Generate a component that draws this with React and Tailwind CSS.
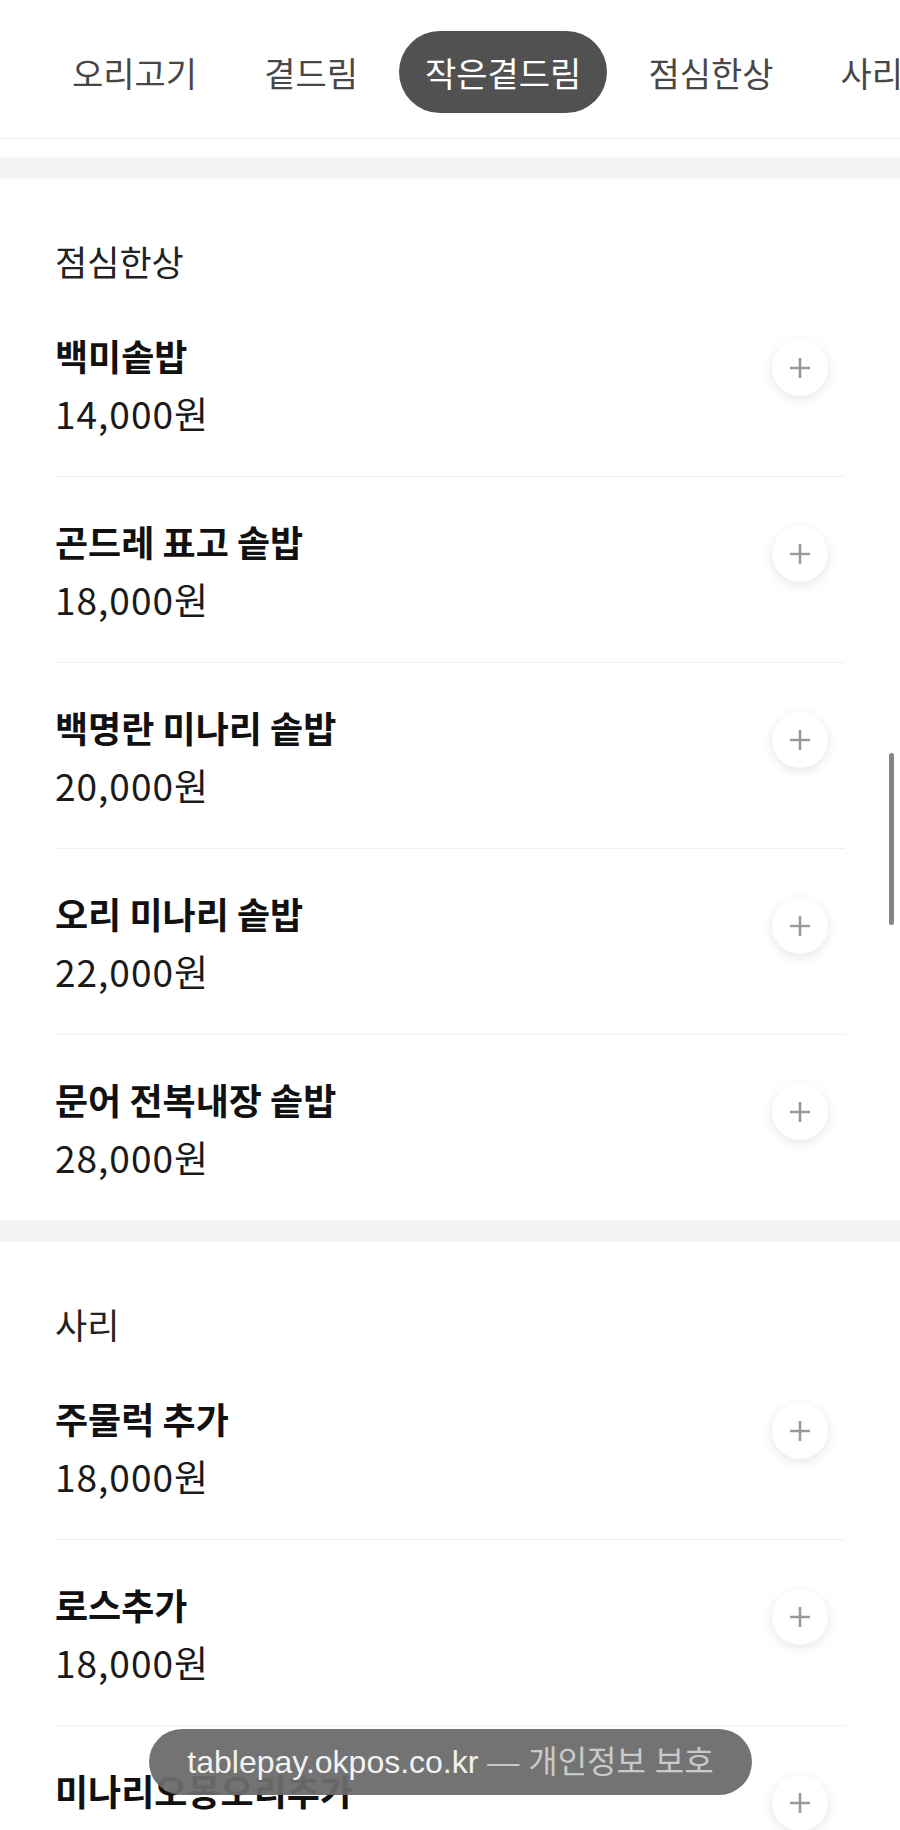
import React from 'react';

const tabs = ['오리고기', '곁드림', '작은곁드림', '점심한상', '사리'];

const sections = [
  {
    title: '점심한상',
    items: [
      { name: '백미솥밥', price: '14,000원' },
      { name: '곤드레 표고 솥밥', price: '18,000원' },
      { name: '백명란 미나리 솥밥', price: '20,000원' },
      { name: '오리 미나리 솥밥', price: '22,000원' },
      { name: '문어 전복내장 솥밥', price: '28,000원' },
    ],
  },
  {
    title: '사리',
    items: [
      { name: '주물럭 추가', price: '18,000원' },
      { name: '로스추가', price: '18,000원' },
      { name: '미나리오몽오리추가', price: '18,000원' },
    ],
  },
];

const PlusButton = () => (
  <button className="mt-[49px] mr-[17px] w-[56px] h-[56px] shrink-0 rounded-full bg-white shadow-[0_3px_12px_rgba(0,0,0,0.10)] flex items-center justify-center">
    <svg width="22" height="22" viewBox="0 0 22 22" fill="none" stroke="#9a9a9a" strokeWidth="2.6">
      <path d="M11 1v20M1 11h20" />
    </svg>
  </button>
);

const MenuRow = ({ item, last }) => (
  <div className={`flex justify-between ${last ? '' : 'border-b border-[#efefef]'}`}>
    <div className="pt-[41px] pb-[40px]">
      <div className="text-[36px] leading-[46px] font-bold text-[#111] whitespace-nowrap">{item.name}</div>
      <div className="mt-[12px] text-[37px] leading-[46px] text-[#1a1a1a] tracking-[1px]">{item.price}</div>
    </div>
    <PlusButton />
  </div>
);

export default function App() {
  return (
    <div
      className="relative w-[900px] h-[1830px] overflow-hidden bg-white"
      style={{ fontFamily: '"Noto Sans CJK KR", "Noto Sans", sans-serif' }}
    >
      <nav className="h-[139px] border-b border-[#ededed] pt-[31px] pl-[46px] flex gap-[15px] whitespace-nowrap">
        {tabs.map((t) => (
          <div
            key={t}
            className={`h-[82px] px-[26px] shrink-0 flex items-center rounded-full text-[34px] ${
              t === '작은곁드림' ? 'bg-[#515151] text-white' : 'text-[#474747]'
            }`}
          >
            {t}
          </div>
        ))}
      </nav>
      <div className="h-[18px]" />

      {sections.map((s) => (
        <div key={s.title}>
          <div className="h-[22px] bg-[#f4f4f4]" />
          <section className="px-[55px] pt-[62px]">
            <h2 className="text-[35px] leading-[40px] text-[#222] mb-[10px]">{s.title}</h2>
            {s.items.map((item, i) => (
              <MenuRow key={item.name} item={item} last={i === s.items.length - 1} />
            ))}
          </section>
        </div>
      ))}

      {/* scrollbar */}
      <div className="absolute left-[889px] top-[753px] w-[5px] h-[172px] rounded-full bg-[#858585]" />

      {/* safari toast */}
      <div
        className="absolute left-[149px] top-[1729px] w-[603px] h-[66px] rounded-full bg-[#6b6b6b]/95 flex items-center justify-center text-[32px] whitespace-nowrap"
        style={{ fontFamily: '"Liberation Sans", "Noto Sans CJK KR", sans-serif' }}
      >
        <span className="text-[#f2f2f2]">tablepay.okpos.co.kr</span>
        <span className="text-[#c9c9c9]">&nbsp;— 개인정보 보호</span>
      </div>
    </div>
  );
}
